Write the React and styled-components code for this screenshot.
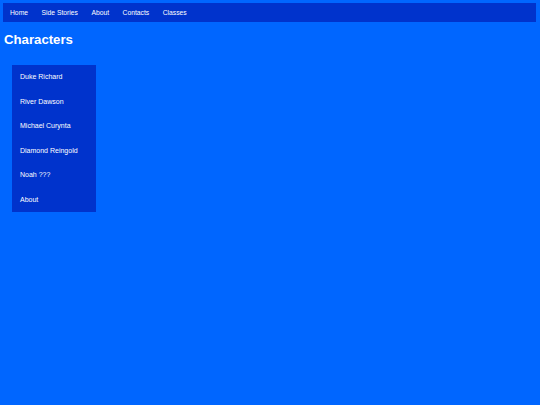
import styled, { createGlobalStyle } from 'styled-components';

const GlobalStyle = createGlobalStyle`
  html, body {
    margin: 0;
    padding: 0;
    background: #0066ff;
    font-family: 'Liberation Sans', Arial, sans-serif;
    color: #ffffff;
  }
`;

const Page = styled.div`
  padding: 3px 4px 0 3px;
`;

const NavBar = styled.nav`
  display: flex;
  align-items: center;
  height: 19px;
  padding-left: 7px;
  gap: 13.5px;
  background: #0033cc;
`;

const NavLink = styled.a`
  font-size: 6.75px;
  color: #ffffff;
  text-decoration: none;
`;

const Title = styled.h1`
  margin: 0;
  padding: 10px 0 0 1px;
  height: 34px;
  box-sizing: border-box;
  font-size: 13.2px;
  font-weight: bold;
  line-height: 16px;
`;

const SideMenu = styled.ul`
  list-style: none;
  margin: 9px 0 0 9px;
  padding: 0;
  width: 84px;
  background: #0033cc;
`;

const MenuItem = styled.li`
  display: flex;
  align-items: center;
  height: 24.5px;
  padding: 0 0 1px 8px;
  box-sizing: border-box;
  font-size: 7px;
`;

const navItems = ['Home', 'Side Stories', 'About', 'Contacts', 'Classes'];
const characters = [
  'Duke Richard',
  'River Dawson',
  'Michael Curynta',
  'Diamond Reingold',
  'Noah ???',
  'About',
];

export default function App() {
  return (
    <Page>
      <GlobalStyle />
      <NavBar>
        {navItems.map((item) => (
          <NavLink key={item}>{item}</NavLink>
        ))}
      </NavBar>
      <Title>Characters</Title>
      <SideMenu>
        {characters.map((name) => (
          <MenuItem key={name}>{name}</MenuItem>
        ))}
      </SideMenu>
    </Page>
  );
}
